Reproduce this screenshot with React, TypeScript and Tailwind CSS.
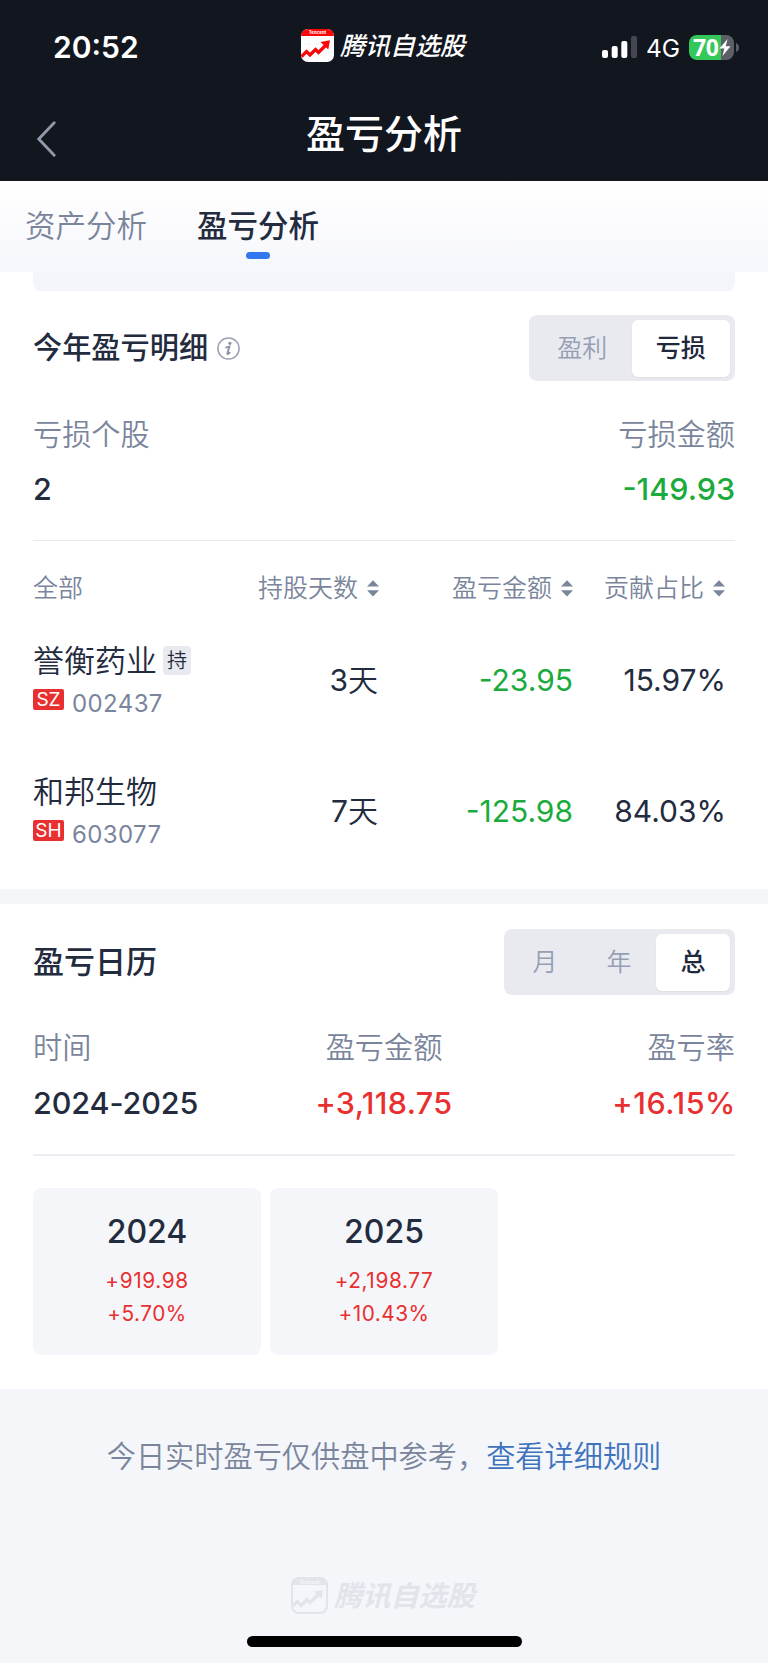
import clsx from "clsx";

interface Stock {
  name: string;
  market: string;
  code: string;
  held?: boolean;
  days: number;
  amount: string;
  ratio: string;
}

const stocks: Stock[] = [
  { name: "誉衡药业", market: "SZ", code: "002437", held: true, days: 3, amount: "-23.95", ratio: "15.97%" },
  { name: "和邦生物", market: "SH", code: "603077", days: 7, amount: "-125.98", ratio: "84.03%" },
];

const years = [
  { year: "2024", amount: "+919.98", rate: "+5.70%" },
  { year: "2025", amount: "+2,198.77", rate: "+10.43%" },
];

function AppLogo() {
  return (
    <svg className="h-[33px] w-[33px]" viewBox="0 0 33 33">
      <rect width="33" height="33" rx="7" fill="#fff" />
      <path d="M0 7a7 7 0 0 1 7-7h19a7 7 0 0 1 7 7z" fill="#fb0506" />
      <text x="16.5" y="5.3" fontSize="4.4" fontWeight="700" fill="#fff" textAnchor="middle">
        Tencent
      </text>
      <path d="M8 7v26M16 7v26M24 7v26M0 15h33M0 24h33" stroke="#f3f3f3" strokeWidth="0.6" />
      <path d="M0.5 27.5 5.5 22.5 9 26 14.5 20.5 17.5 23.5 25.5 15.5" fill="none" stroke="#fb0506" strokeWidth="3.2" />
      <path d="M19.5 13 29 11.3 27.3 20.5z" fill="#fb0506" />
    </svg>
  );
}

function WatermarkLogo() {
  return (
    <svg className="h-[37px] w-[37px]" viewBox="0 0 37 37">
      <rect x="1" y="1" width="35" height="35" rx="7" fill="none" stroke="#e2e4ec" strokeWidth="2" />
      <path d="M0 8a8 8 0 0 1 8-8h21a8 8 0 0 1 8 8z" fill="#e2e4ec" />
      <text x="18.5" y="6.5" fontSize="5" fontWeight="700" fontStyle="italic" fill="#f4f6fa" textAnchor="middle">
        Tencent
      </text>
      <path d="M2 29 6.5 24.5 10 28.5 16 22.5 19 25.5 28 17" fill="none" stroke="#e2e4ec" strokeWidth="3.2" />
      <path d="M22.5 14.5 32 13 30.5 22z" fill="#e2e4ec" />
    </svg>
  );
}

function SortIcon() {
  return (
    <svg className="ml-[9px] h-[17px] w-3 shrink-0" viewBox="0 0 12 17" fill="#7a859c">
      <path d="M6 0.3 12 6.5H0zM6 16.5 12 10.3H0z" />
    </svg>
  );
}

function Segmented({ items, active, itemClass }: { items: string[]; active: string; itemClass: string }) {
  return (
    <div className="flex h-[66px] rounded-lg bg-[#e9eaf0] py-[4.5px] pr-[5px] pl-1">
      {items.map((item) => (
        <button
          key={item}
          className={clsx(
            "flex h-[57px] items-center justify-center rounded-md text-[25px]",
            itemClass,
            item === active ? "bg-white font-medium text-[#20283c] shadow-xs" : "font-[350] text-[#959eb3]",
          )}
        >
          {item}
        </button>
      ))}
    </div>
  );
}

function StatusBar() {
  return (
    <div className="flex h-[94px] items-center text-white">
      <div className="w-[301px] pl-[53px] text-[30px] font-semibold">20:52</div>
      <div className="flex w-[301px] items-center pb-[3px]">
        <AppLogo />
        <span className="ml-1.5 text-[25px] leading-8 font-medium italic">腾讯自选股</span>
      </div>
      <svg className="h-[22px] w-[35px]" viewBox="0 0 35 22" fill="#fff">
        <rect y="14" width="6" height="8" rx="2" />
        <rect x="9.7" y="10" width="6" height="12" rx="2" />
        <rect x="19.3" y="5" width="6" height="17" rx="2" />
        <rect x="29" width="6" height="22" rx="2" fill="#44474f" />
      </svg>
      <span className="ml-[9px] w-[43px] pt-0.5 text-[24.5px]">4G</span>
      <div className="flex items-center">
        <div className="flex h-[25px] w-[45px] items-center rounded-lg bg-linear-to-r from-[#34c759] from-70% to-[#5c5f66] to-70% pl-1">
          <span className="font-['Noto_Sans'] text-[23px] font-bold tracking-[-0.5px]">70</span>
          <svg className="ml-px h-[17px] w-[12px] shrink-0" viewBox="0 0 12 17" fill="#fff">
            <path d="M8.6 0 0.5 9.4h4.9L3.4 17l8.2-9.8H6.7z" />
          </svg>
        </div>
        <svg className="ml-[2px] h-[9px] w-[3px]" viewBox="0 0 3 9" fill="#5c5f66">
          <path d="M0 0c4 1 4 8 0 9z" />
        </svg>
      </div>
    </div>
  );
}

export default function App() {
  return (
    <div className="flex h-[1663px] w-full flex-col bg-[#f4f6fa] font-['Inter','Noto_Sans_CJK_SC',sans-serif] leading-none text-[#232b3e]">
      <header className="h-[181px] shrink-0 bg-[#12161f]">
        <StatusBar />
        <div className="grid h-20 grid-cols-[1fr_auto_1fr] items-center">
          <svg className="mt-[9px] ml-[37px] h-9 w-[19px]" viewBox="0 0 19 36" fill="none">
            <path d="M17.2 1.8 1.8 18l15.4 16.2" stroke="#9299a9" strokeWidth="2.8" strokeLinecap="round" />
          </svg>
          <h1 className="-mt-0.5 text-[39px] font-medium text-white">盈亏分析</h1>
        </div>
      </header>

      <nav className="flex h-[91px] shrink-0 items-center bg-linear-to-b from-white to-[#f6f7fc] pl-[25px] text-[30.5px]">
        <span className="font-[350] text-[#7a859c]">资产分析</span>
        <span className="relative ml-[50px] font-medium">
          盈亏分析
          <span className="absolute top-[41px] left-1/2 h-[7px] w-6 -translate-x-1/2 rounded-full bg-[#3177ed]" />
        </span>
      </nav>

      <section className="h-[617px] shrink-0 bg-white px-[33px]">
        <div className="h-[19px] rounded-b-lg bg-[#f4f5fa]" />
        <div className="mt-6 flex items-center justify-between">
          <h2 className="flex items-center text-[29.2px] font-medium">
            今年盈亏明细
            <svg className="mt-0.5 ml-[9px] h-[23px] w-[23px]" viewBox="0 0 23 23">
              <circle cx="11.5" cy="11.5" r="10.6" fill="none" stroke="#99a2b6" strokeWidth="1.5" />
              <circle cx="12.9" cy="6.3" r="1.6" fill="#8c95aa" />
              <path d="M8.4 10.6 12.4 9.6 10.4 16.3q-.2 1 .7.6l2.2-1.6" fill="none" stroke="#8c95aa" strokeWidth="1.9" />
            </svg>
          </h2>
          <Segmented items={["盈利", "亏损"]} active="亏损" itemClass="w-[98.5px]" />
        </div>

        <div className="mt-[34px] flex h-10 items-center justify-between text-[29.2px] font-[350] text-[#7a859c]">
          <span>亏损个股</span>
          <span>亏损金额</span>
        </div>
        <div className="mt-3.5 flex h-10 items-center justify-between text-[30.5px] font-medium">
          <span>2</span>
          <span className="text-[#1aab3c]">-149.93</span>
        </div>
        <div className="mt-[31px] h-px bg-[#e9eaef]" />

        <div className="mt-[23px] grid h-12 grid-cols-[200px_146px_194px_152px] items-center text-[25px] font-[350] text-[#7a859c]">
          <span>全部</span>
          {["持股天数", "盈亏金额", "贡献占比"].map((label) => (
            <span key={label} className="flex items-center justify-end">
              {label}
              <SortIcon />
            </span>
          ))}
        </div>

        {stocks.map((stock) => (
          <div key={stock.code} className="grid h-[131px] grid-cols-[200px_145px_195px_153px] pt-[29px] text-[30px]">
            <div>
              <div className="flex h-[39px] items-center text-[31px] font-[350]">
                {stock.name}
                {stock.held && (
                  <span className="ml-1.5 flex h-[29px] w-7 items-center justify-center rounded-sm bg-[#e9eaf0] text-[20px]">
                    持
                  </span>
                )}
              </div>
              <div className="flex h-[47px] items-center">
                <span className="mb-2 flex h-[21px] w-[31px] items-center justify-center rounded-xs bg-[#e93030] text-[19px] text-white">
                  {stock.market}
                </span>
                <span className="mt-px ml-2 text-[24px] tracking-[0.4px] text-[#7a859c]">{stock.code}</span>
              </div>
            </div>
            <div className="flex h-[78px] items-center justify-end font-[350]">
              <span className="font-normal">{stock.days}</span>天
            </div>
            <div className="flex h-[78px] items-center justify-end text-[#1aab3c]">{stock.amount}</div>
            <div className="flex h-[78px] items-center justify-end">{stock.ratio}</div>
          </div>
        ))}
      </section>

      <section className="mt-[15px] h-[485px] shrink-0 bg-white px-[33px] pt-[25px]">
        <div className="flex items-center justify-between">
          <h2 className="-mt-0.5 text-[31px] font-medium">盈亏日历</h2>
          <Segmented items={["月", "年", "总"]} active="总" itemClass="w-[74px]" />
        </div>

        <div className="mt-[33px] grid h-10 grid-cols-3 items-center text-[29.2px] font-[350] text-[#7a859c]">
          <span>时间</span>
          <span className="text-center">盈亏金额</span>
          <span className="text-right">盈亏率</span>
        </div>
        <div className="mt-[15px] grid h-10 grid-cols-3 items-center text-[30.5px] font-medium">
          <span className="tracking-[-0.1px]">2024-2025</span>
          <span className="text-center tracking-[0.4px] text-[#e93030]">+3,118.75</span>
          <span className="-mr-px text-right tracking-[0.6px] text-[#e93030]">+16.15%</span>
        </div>
        <div className="mt-[31px] h-0.5 bg-[#ecedf3]" />

        <div className="mt-8 grid grid-cols-3 gap-[9px]">
          {years.map((item) => (
            <div key={item.year} className="flex h-[167px] flex-col items-center rounded-lg bg-[#f4f6fa] pt-7">
              <div className="text-[32px] leading-8 font-medium">{item.year}</div>
              <div className="mt-4 text-[20.8px] leading-[33px] tracking-[0.6px] text-[#e93030]">{item.amount}</div>
              <div className="text-[20.8px] leading-[33px] tracking-[0.5px] text-[#e93030]">{item.rate}</div>
            </div>
          ))}
        </div>
      </section>

      <footer className="flex flex-1 flex-col items-center">
        <p className="mt-12 h-10 text-[29.2px] leading-10 font-[350] whitespace-nowrap text-[#7a859c]">
          今日实时盈亏仅供盘中参考，<a className="text-[#3e72bd]">查看详细规则</a>
        </p>
        <div className="mt-[100px] flex items-center pr-0.5">
          <WatermarkLogo />
          <span className="mt-0.5 ml-1.5 text-[28.2px] font-bold text-[#e2e4ec] italic">腾讯自选股</span>
        </div>
        <div className="mt-[22px] h-[11px] w-[275px] rounded-full bg-black" />
      </footer>
    </div>
  );
}
